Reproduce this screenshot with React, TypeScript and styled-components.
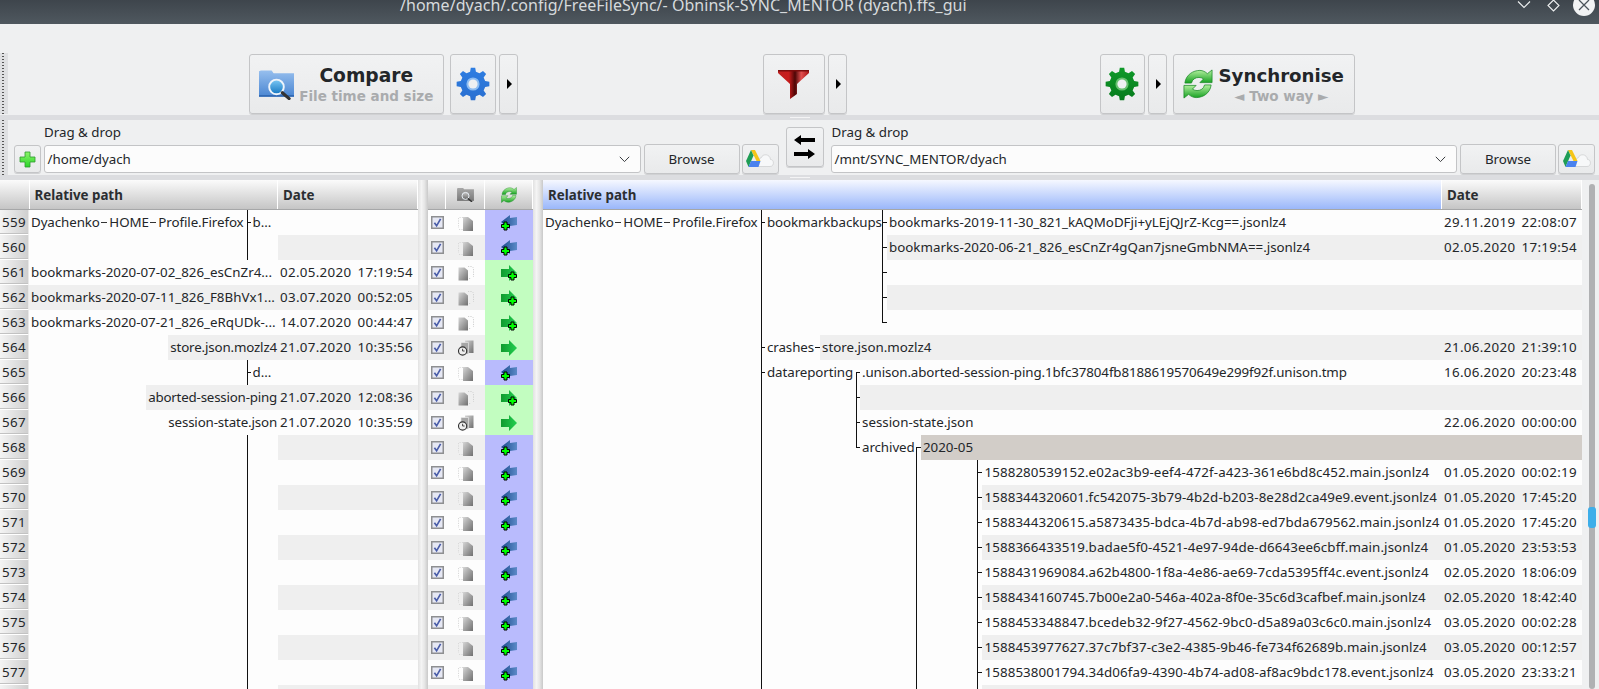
import React from "react";
import styled, { createGlobalStyle } from "styled-components";

const Global = createGlobalStyle`
  html, body { margin: 0; padding: 0; background: #eff0f1; }
  body { font-family: "Noto Sans", "Open Sans", sans-serif; font-size: 13.33px; color: #232629; overflow: hidden; }
  * { box-sizing: border-box; }
`;

const Page = styled.div`
  width: 1599px; height: 689px; display: flex; flex-direction: column; overflow: hidden; background: #eff0f1;
`;
const TitleBar = styled.div`
  height: 24px; flex: none; display: flex; justify-content: space-between; overflow: hidden;
  background: linear-gradient(#3e454c, #4f585f);
`;
const TitleText = styled.div`
  margin-left: 400px; width: 580px; font-size: 16px; letter-spacing: .03px; line-height: 10px; color: #d6dadc; white-space: nowrap;
`;
const Toolbar = styled.div`
  height: 91px; flex: none; display: flex; align-items: flex-end; padding-bottom: 1px;
`;
const Grip = styled.div`
  width: 8px; flex: none; align-self: stretch; background-color: #dfe0e2; margin-top: ${p => p.$top || 0}px;
  background-image: radial-gradient(circle, #555 0 1px, transparent 1px);
  background-size: 2px 3px; background-repeat: repeat-y; background-position: 2px 2px;
`;
const ToolGroup = styled.div<{ $at: number }>`
  display: flex; margin-left: ${p => p.$at}px; height: 60px; gap: ${p => p.$gap ?? 3}px;
`;
const Raised = styled.div`
  display: flex; align-items: center; justify-content: center; flex: none;
  border: 1px solid #c4c5c7; border-radius: 3px; background: linear-gradient(#f1f2f3, #e9eaeb);
  box-shadow: 0 1px 0 #d0d1d3;
`;
const BigButton = styled(Raised)<{ $w: number; $lead?: number }>`
  width: ${p => p.$w}px; height: 60px; padding: 0 9px; gap: 5px; margin-left: ${p => p.$lead || 0}px;
  justify-content: flex-start;
`;
const IconButton = styled(Raised)<{ $w: number; $lead?: number }>`
  width: ${p => p.$w}px; height: 60px; margin-left: ${p => p.$lead || 0}px;
`;
const MenuButton = styled(Raised)` width: 19px; height: 60px; padding-left: 2px; `;
const Triangle = styled.span`
  width: 0; height: 0; border-left: 5px solid #000; border-top: 5px solid transparent; border-bottom: 5px solid transparent;
`;
const BigLabel = styled.div`
  flex: 1; display: flex; flex-direction: column; align-items: center; font-family: "DejaVu Sans", sans-serif; font-weight: 700;
`;
const BigTitle = styled.div<{ $size?: number }>`
  font-size: ${p => p.$size || 18.67}px; line-height: 24px; color: #232629; white-space: nowrap;
`;
const BigSub = styled.div`
  font-size: 13.5px; line-height: 17px; color: #a9abad; white-space: nowrap;
`;
const Sash = styled.div`
  height: 5px; flex: none; background: #dcdde0; display: flex; justify-content: center; padding-top: 2px;
  &::after { content: ""; width: 20px; height: 1px; background: #f4f4f5; }
`;
const FolderBar = styled.div`
  height: 55px; flex: none; display: flex;
`;
const FolderPanel = styled.div<{ $w: number }>`
  width: ${p => p.$w}px; flex: none; display: flex; flex-direction: column;
`;
const DropLabel = styled.div<{ $at: number }>`
  height: 25px; padding-left: ${p => p.$at}px; line-height: 24px; white-space: nowrap;
`;
const FolderRow = styled.div<{ $lead?: number }>`
  display: flex; align-items: center; height: 30px; margin-top: -1px; padding-left: ${p => p.$lead || 0}px;
`;
const PlusButton = styled(Raised)` width: 27px; height: 28px; margin-right: 2.5px; `;
const Combo = styled.div<{ $w: number }>`
  width: ${p => p.$w}px; height: 28px; flex: none; display: flex; align-items: center; justify-content: space-between;
  border: 1px solid #c3c4c6; border-radius: 3px; background: #fcfcfc; padding: 0 10px 0 3px; margin-right: 3px;
`;
const Browse = styled(Raised)`
  width: 96px; height: 30px; margin-right: 2px;
`;
const Cloud = styled(Raised)` width: 37px; height: 30px; `;
const SwapSlot = styled.div`
  width: 38px; flex: none; margin: 7px 7px 0 7px;
`;
const SwapButton = styled(Raised)` width: 38px; height: 40px; `;

const Main = styled.div`
  flex: 1; min-height: 0; display: flex; background: #fdfdfd; overflow: hidden;
`;
const Column = styled.div<{ $w: number }>`
  width: ${p => p.$w}px; flex: none; display: flex; flex-direction: column;
`;
const HeaderRow = styled.div`
  height: 30px; flex: none; display: flex; border-bottom: 1px solid #a6a7a8;
`;
const HeadCell = styled.div<{ $w?: number; $active?: boolean }>`
  ${p => (p.$w ? `width:${p.$w}px;flex:none;` : "flex:1;")}
  display: flex; align-items: center; padding-left: 5px; font-weight: 700; color: #2b2e31; white-space: nowrap;
  background: ${p => (p.$active ? "linear-gradient(#f6f8ff, #9ab7fb)" : "linear-gradient(#fbfbfb, #c5c5c5)")};
  border-right: 1px solid #fff;
`;
const IconHead = styled(HeadCell)` justify-content: center; padding: 0; `;
const Row = styled.div`
  height: 25px; flex: none; display: flex; line-height: 24px;
`;
const RowNum = styled.div`
  width: 29px; flex: none; padding-left: 2px; background: linear-gradient(90deg, #f4f4f4, #cfcfcf);
  border-bottom: 1px solid #fff; border-right: 1px solid #e8e8e8; box-shadow: inset 0 -1px 0 #c2c2c2; letter-spacing: .35px;
`;
const PathCell = styled.div<{ $alt?: boolean; $end?: boolean }>`
  flex: 1; min-width: 0; display: flex; white-space: nowrap; overflow: hidden;
  justify-content: ${p => (p.$end ? "flex-end" : "flex-start")};
  background: ${p => (p.$alt ? "#efefef" : "transparent")};
`;
const DateCell = styled.div<{ $w: number; $alt?: boolean; $tone?: string }>`
  width: ${p => p.$w}px; flex: none; display: flex; justify-content: space-between; padding: 0 5px 0 2px; white-space: nowrap;
  background: ${p => p.$tone || (p.$alt ? "#efefef" : "transparent")};
  letter-spacing: .33px;
`;
const Seg = styled.div<{ $w: number; $pad?: number }>`
  width: ${p => p.$w}px; flex: none; padding-left: ${p => p.$pad || 0}px; display: flex; white-space: nowrap; letter-spacing: -.08px;
`;
const Name = styled.div<{ $tone?: string; $pad?: number; $fill?: boolean; $track?: number }>`
  ${p => (p.$fill ? "flex:1;" : "flex:none;")} min-width: 0; padding: 0 1px 0 ${p => p.$pad ?? 2}px;
  background: ${p => p.$tone || "transparent"}; white-space: nowrap; overflow: hidden;
  letter-spacing: ${p => p.$track || 0}px;
`;
const Dash = styled.span`
  display: inline-block; width: 6px; height: 1px; background: #333; margin: 12px 2px 0 1.5px; flex: none;
`;
const Guide = styled.div<{ $w: number; $v?: "full" | "top" | "bottom"; $tick?: number }>`
  width: ${p => p.$w}px; flex: none; height: 25px; background-repeat: no-repeat;
  background-image: linear-gradient(#111, #111), linear-gradient(#111, #111);
  background-size:
    1px ${p => (p.$v === "full" ? 25 : p.$v ? 13 : 0)}px,
    ${p => p.$tick || 0}px 1px;
  background-position:
    0 ${p => (p.$v === "bottom" ? 12 : 0)}px,
    0 12px;
`;
const Sep = styled.div`
  width: 10px; flex: none; background: linear-gradient(90deg, #e2e2e2 0, #f4f4f4 35%, #e6e6e6 65%, #c9c9c9 100%);
`;
const CheckCell = styled.div<{ $alt?: boolean }>`
  width: 18px; flex: none; display: flex; align-items: center; justify-content: center; padding-bottom: 1px;
  background: ${p => (p.$alt ? "#efefef" : "transparent")};
`;
const CatCell = styled.div<{ $alt?: boolean }>`
  width: 39px; flex: none; display: flex; align-items: center; justify-content: center;
  background: ${p => (p.$alt ? "#efefef" : "transparent")};
`;
const ActionCell = styled.div<{ $dir: string }>`
  width: 48px; flex: none; display: flex; align-items: center; justify-content: center;
  background: ${p => (p.$dir === "l" ? "#b9bbfd" : "#c2fdc0")};
`;
const ScrollTrack = styled.div`
  width: 17px; flex: none; background: #eff0f1; padding: 4px 4px 0 7px; display: flex; flex-direction: column; align-items: stretch; height: 100%;
`;
const ScrollGroove = styled.div`
  height: 100%; background: #b0b1b3; border-radius: 3px; padding-top: 323px;
`;
const ScrollThumb = styled.div`
  height: 21px; background: #3daee9; border-radius: 3px; margin: 0 -1px;
`;

/* ---------- drawings ---------- */
function gearPath(cx: number, cy: number, ro: number, ri: number, teeth = 8) {
  const pts: string[] = [];
  const step = (Math.PI * 2) / teeth;
  for (let i = 0; i < teeth; i++) {
    const a = i * step - Math.PI / 2;
    const list: [number, number][] = [
      [ri, a - step * 0.3], [ro, a - step * 0.17], [ro, a + step * 0.17], [ri, a + step * 0.3],
    ];
    list.forEach(([r, t]) => pts.push(`${(cx + r * Math.cos(t)).toFixed(2)} ${(cy + r * Math.sin(t)).toFixed(2)}`));
  }
  return "M" + pts.join("L") + "Z";
}
const Gear = ({ c1, c2, ring }: { c1: string; c2: string; ring: string }) => (
  <svg width="34" height="34" viewBox="0 0 34 34">
    <defs>
      <linearGradient id={"g" + c1.slice(1)} x1="0" y1="0" x2="0" y2="1">
        <stop offset="0" stopColor={c1} /><stop offset="1" stopColor={c2} />
      </linearGradient>
    </defs>
    <path d={gearPath(17, 17, 16.5, 12.5)} fill={`url(#g${c1.slice(1)})`} />
    <circle cx="17" cy="17" r="6.6" fill={ring} />
    <circle cx="17" cy="17" r="4.6" fill="#eef0f2" />
  </svg>
);
const FolderLens = ({ grey, w, h }: { grey?: boolean; w: number; h: number }) => (
  <svg width={w} height={h} viewBox="0 0 36 32">
    <defs>
      <linearGradient id={grey ? "fg" : "fb"} x1="0" y1="0" x2="0" y2="1">
        <stop offset="0" stopColor={grey ? "#a8a8a8" : "#97bfee"} />
        <stop offset="1" stopColor={grey ? "#7a7a7a" : "#4a86d2"} />
      </linearGradient>
      <linearGradient id={grey ? "lg" : "lb"} x1="0" y1="0" x2="0" y2="1">
        <stop offset="0" stopColor={grey ? "#c8c8c8" : "#7cc8f4"} />
        <stop offset="1" stopColor={grey ? "#666" : "#1577c2"} />
      </linearGradient>
    </defs>
    <path d="M0 3 L0 29 L36 29 L36 5 L15 5 L13 2 L2 2 Z" fill={`url(#${grey ? "fg" : "fb"})`} />
    <rect x="0" y="27.5" width="36" height="1.5" fill={grey ? "#666" : "#2d64ae"} />
    <circle cx="18" cy="19" r="7.5" fill={`url(#${grey ? "lg" : "lb"})`} stroke="#eef4fb" strokeWidth="2" />
    <path d="M24 25 L31 31" stroke="#333" strokeWidth="3.2" strokeLinecap="round" />
  </svg>
);
const Funnel = () => (
  <svg width="31" height="30" viewBox="0 0 31 30">
    <defs>
      <linearGradient id="fn" x1="0" y1="0" x2="1" y2="0">
        <stop offset="0" stopColor="#c02020" /><stop offset=".35" stopColor="#c81c1c" />
        <stop offset=".55" stopColor="#4c0606" /><stop offset=".75" stopColor="#e25050" /><stop offset="1" stopColor="#a81414" />
      </linearGradient>
    </defs>
    <path d="M0 1 H31 V4 L19 15 V25 L12 30 V15 L0 4 Z" fill="url(#fn)" />
    <rect x="0" y="1" width="31" height="1.5" fill="#7c0c0c" />
  </svg>
);
const SyncArrows = ({ size }: { size: number }) => (
  <svg width={size} height={size} viewBox="0 0 32 32">
    <defs>
      <linearGradient id="sy" x1="0" y1="0" x2="0" y2="1">
        <stop offset="0" stopColor="#b4f0a0" /><stop offset="1" stopColor="#14a020" />
      </linearGradient>
    </defs>
    <path d="M2 15 C3 6 11 1.5 18 1.5 C21 1.5 24 3 26 5 L31 1 L31 14.5 L18 14.5 L22 10.5 C20 9.5 19 9 17 9 C13 9 10 11 9 15 Z" fill="url(#sy)" stroke="#1a8a26" strokeWidth=".8" />
    <path d="M30 17 C29 26 21 30.5 14 30.5 C11 30.5 8 29 6 27 L1 31 L1 17.5 L14 17.5 L10 21.5 C12 22.5 13 23 15 23 C19 23 22 21 23 17 Z" fill="url(#sy)" stroke="#1a8a26" strokeWidth=".8" />
  </svg>
);
const GreenPlus = () => (
  <svg width="17" height="17" viewBox="0 0 17 17">
    <defs>
      <linearGradient id="gp" x1="0" y1="0" x2="0" y2="1">
        <stop offset="0" stopColor="#8cf56a" /><stop offset="1" stopColor="#2ad42a" />
      </linearGradient>
    </defs>
    <path d="M6 1 H11 V6 H16 V11 H11 V16 H6 V11 H1 V6 H6 Z" fill="url(#gp)" stroke="#2f9a2f" strokeWidth=".8" />
  </svg>
);
const Chevron = () => (
  <svg width="11" height="7" viewBox="0 0 11 7">
    <path d="M.8 .8 L5.5 5.6 L10.2 .8" fill="none" stroke="#3a3d40" strokeWidth="1" />
  </svg>
);
const DriveCloud = () => (
  <svg width="28" height="18" viewBox="0 0 28 18">
    <path d="M12 16.5 H24 C28.5 16.5 28.5 9.5 24.5 9.5 C24 4 17 3 15 8 C12 8 10 16 12 16.5 Z" fill="#f7f8f9" stroke="#cfd0d2" strokeWidth=".8" />
    <path d="M5 0 L9 0 L14.5 11 L10.5 11 Z" fill="#f5c518" />
    <path d="M5 0 L0 11 L2.5 17 L7.5 5.5 Z" fill="#1f9d55" />
    <path d="M5 11 L14.5 11 L12.5 17 L2.5 17 Z" fill="#4a82ee" />
  </svg>
);
const SwapArrows = () => (
  <svg width="21" height="24" viewBox="0 0 21 24">
    <path d="M0 5 L7 0 V3 H21 V7 H7 V10 Z" fill="#000" />
    <path d="M21 19 L14 14 V17 H0 V21 H14 V24 Z" fill="#000" />
  </svg>
);
const Check = () => (
  <svg width="13" height="13" viewBox="0 0 13 13">
    <rect x=".75" y=".75" width="11.5" height="11.5" fill="#e6e8f4" stroke="#8e8f91" strokeWidth="1.5" />
    <path d="M3.4 6.8 L5.6 9.8 L9.6 2.8" fill="none" stroke="#4a5da8" strokeWidth="1.7" />
  </svg>
);
const docGrad = (
  <defs>
    <linearGradient id="dg" x1="0" y1="0" x2="1" y2="1">
      <stop offset="0" stopColor="#d6d6d6" /><stop offset="1" stopColor="#6f6f6f" />
    </linearGradient>
  </defs>
);
const Cat = ({ kind }: { kind: string }) => (
  <svg width="16" height="16" viewBox="0 0 16 16">
    {docGrad}
    {kind === "l" && (
      <>
        <path d="M1.5 2.5 H6 M.5 3 V13 M1 14.5 H5" fill="none" stroke="#d9d9d9" strokeDasharray="1.2 1.2" />
        <path d="M5 2 H10 L15 6 V16 H5 Z" fill="url(#dg)" />
      </>
    )}
    {kind === "r" && (
      <>
        <path d="M10 1.5 H14 L15.5 3 V12 M11 13.5 H13" fill="none" stroke="#d0d0d0" strokeDasharray="1.2 1.2" />
        <path d="M.5 2.5 H6.5 L10 5.5 V15.5 H.5 Z" fill="url(#dg)" />
      </>
    )}
    {kind === "t" && (
      <>
        <path d="M7 .5 H15.5 V13 H7 Z" fill="url(#dg)" />
        <path d="M3 2.5 H10.5 V14 H3 Z" fill="#a6a6a6" stroke="#eee" strokeWidth=".6" />
        <circle cx="4.6" cy="11" r="4.1" fill="#eee" stroke="#333" strokeWidth="1.1" />
        <path d="M4.6 8.8 V11 H6.6" fill="none" stroke="#333" strokeWidth=".9" />
      </>
    )}
  </svg>
);
const PLUS = "M3 .5 H6 V3 H8.5 V6 H6 V8.5 H3 V6 H.5 V3 H3 Z";
const Action = ({ dir, plus }: { dir: string; plus: boolean }) => (
  <svg width="16" height="16" viewBox="0 0 16 16">
    <defs>
      <linearGradient id="al" x1="0" y1="0" x2="1" y2="0">
        <stop offset="0" stopColor="#1a4a8c" /><stop offset="1" stopColor="#5c8ac8" />
      </linearGradient>
      <linearGradient id="ar" x1="0" y1="0" x2="1" y2="0">
        <stop offset="0" stopColor="#0f9a2e" /><stop offset="1" stopColor="#22cf50" />
      </linearGradient>
    </defs>
    {dir === "l" ? (
      <>
        <path d="M0 7 L9 0 V3 L16 2 V10 L9 11 V14 Z" fill="url(#al)" />
        {plus && <path transform="translate(0 6.5)" d={PLUS} fill="#0f0" stroke="#000" strokeWidth="1" />}
      </>
    ) : (
      <>
        <path d="M0 4 H8 V0 L16 8 L8 16 V12 H0 Z" fill="url(#ar)" />
        {plus && <path transform="translate(7 6.5)" d={PLUS} fill="#0f0" stroke="#000" strokeWidth="1" />}
      </>
    )}
  </svg>
);
const WindowButtons = () => (
  <svg width="90" height="24" viewBox="0 0 90 24">
    <path d="M9 1.5 L15 7.5 L21 1.5" fill="none" stroke="#eef0f1" strokeWidth="1.1" />
    <path d="M39 5.5 L44.5 0 L50 5.5 L44.5 11 Z" fill="none" stroke="#eef0f1" strokeWidth="1.1" />
    <circle cx="75" cy="5" r="11" fill="#f2f3f4" />
    <path d="M70 0 L80 10 M80 0 L70 10" stroke="#4b535a" strokeWidth="1.3" />
  </svg>
);

/* ---------- data ---------- */
const kinds: Record<number, [string, string, boolean]> = {
  559: ["l", "l", true], 560: ["l", "l", true], 561: ["r", "r", true], 562: ["r", "r", true], 563: ["r", "r", true],
  564: ["t", "r", false], 565: ["l", "l", true], 566: ["r", "r", true], 567: ["t", "r", false],
};
const nums = Array.from({ length: 20 }, (_, i) => 559 + i);

const leftDates: Record<number, [string, string]> = {
  561: ["02.05.2020", "17:19:54"], 562: ["03.07.2020", "00:52:05"], 563: ["14.07.2020", "00:44:47"],
  564: ["21.07.2020", "10:35:56"], 566: ["21.07.2020", "12:08:36"], 567: ["21.07.2020", "10:35:59"],
};
const rightDates: Record<number, [string, string]> = {
  559: ["29.11.2019", "22:08:07"], 560: ["02.05.2020", "17:19:54"], 564: ["21.06.2020", "21:39:10"],
  565: ["16.06.2020", "20:23:48"], 567: ["22.06.2020", "00:00:00"], 569: ["01.05.2020", "00:02:19"],
  570: ["01.05.2020", "17:45:20"], 571: ["01.05.2020", "17:45:20"], 572: ["01.05.2020", "23:53:53"],
  573: ["02.05.2020", "18:06:09"], 574: ["02.05.2020", "18:42:40"], 575: ["03.05.2020", "00:02:28"],
  576: ["03.05.2020", "00:12:57"], 577: ["03.05.2020", "23:33:21"],
};
const files: Record<number, string> = {
  569: "1588280539152.e02ac3b9-eef4-472f-a423-361e6bd8c452.main.jsonlz4",
  570: "1588344320601.fc542075-3b79-4b2d-b203-8e28d2ca49e9.event.jsonlz4",
  571: "1588344320615.a5873435-bdca-4b7d-ab98-ed7bda679562.main.jsonlz4",
  572: "1588366433519.badae5f0-4521-4e97-94de-d6643ee6cbff.main.jsonlz4",
  573: "1588431969084.a62b4800-1f8a-4e86-ae69-7cda5395ff4c.event.jsonlz4",
  574: "1588434160745.7b00e2a0-546a-402a-8f0e-35c6d3cafbef.main.jsonlz4",
  575: "1588453348847.bcedeb32-9f27-4562-9bc0-d5a89a03c6c0.main.jsonlz4",
  576: "1588453977627.37c7bf37-c3e2-4385-9b46-fe734f62689b.main.jsonlz4",
  577: "1588538001794.34d06fa9-4390-4b74-ad08-af8ac9bdc178.event.jsonlz4",
};
const GREY = "#efefef";
const BEIGE = "#d2cdc8";

const LeftPath = ({ n }: { n: number }) => {
  if (n === 559 || n === 565)
    return (
      <PathCell>
        <Seg $w={217.5} $pad={2}>{n === 559 && <>Dyachenko<Dash />HOME<Dash />Profile.Firefox</>}</Seg>
        <Guide $w={6} $v="full" $tick={4} />
        <Name $pad={0}>{n === 559 ? "b..." : "d..."}</Name>
      </PathCell>
    );
  if (n === 561) return <PathCell><Name>bookmarks-2020-07-02_826_esCnZr4...</Name></PathCell>;
  if (n === 562) return <PathCell $alt><Name>bookmarks-2020-07-11_826_F8BhVx1...</Name></PathCell>;
  if (n === 563) return <PathCell><Name>bookmarks-2020-07-21_826_eRqUDk-...</Name></PathCell>;
  if (n === 564) return <PathCell $end><Name $tone={GREY} $track={-.15}>store.json.mozlz4</Name></PathCell>;
  if (n === 566) return <PathCell $end><Name $tone={GREY} $track={-.2}>aborted-session-ping</Name></PathCell>;
  if (n === 567) return <PathCell $end><Name $track={-.15}>session-state.json</Name></PathCell>;
  return (
    <PathCell>
      <Seg $w={217.5} />
      <Guide $w={6} $v="full" />
    </PathCell>
  );
};

const RightPath = ({ n }: { n: number }) => {
  const alt = n % 2 === 0;
  const tone = alt ? GREY : undefined;
  const first = n === 559;
  const root = (
    <Seg $w={217.5} $pad={2}>{first && <>Dyachenko<Dash />HOME<Dash />Profile.Firefox</>}</Seg>
  );
  if (n <= 563) {
    const names: Record<number, string> = {
      559: "bookmarks-2019-11-30_821_kAQMoDFji+yLEjQJrZ-Kcg==.jsonlz4",
      560: "bookmarks-2020-06-21_826_esCnZr4gQan7jsneGmbNMA==.jsonlz4",
    };
    return (
      <PathCell>
        {root}
        <Guide $w={6.5} $v="full" $tick={first ? 4 : 0} />
        <Seg $w={115}>{first && "bookmarkbackups"}</Seg>
        <Guide $w={5} $v={n === 563 ? "top" : "full"} $tick={5} />
        <Name $fill $tone={tone}>{names[n]}</Name>
      </PathCell>
    );
  }
  if (n === 564)
    return (
      <PathCell>
        {root}
        <Guide $w={6.5} $v="full" $tick={4} />
        <Seg $w={48}>crashes</Seg>
        <Guide $w={5} $tick={5} />
        <Name $fill $tone={GREY}>store.json.mozlz4</Name>
      </PathCell>
    );
  if (n >= 565 && n <= 568) {
    return (
      <PathCell>
        {root}
        <Guide $w={6.5} $v="full" $tick={n === 565 ? 4 : 0} />
        <Seg $w={89}>{n === 565 && "datareporting"}</Seg>
        {n === 566 ? (
          <>
            <Guide $w={4} $v="full" $tick={4} />
            <Name $fill $tone={GREY} />
          </>
        ) : (
          <>
            <Guide $w={6} $v={n === 565 ? "bottom" : n === 568 ? "top" : "full"} $tick={4} />
            {n === 565 && <Name $fill $pad={0} $track={-.11}>.unison.aborted-session-ping.1bfc37804fb8188619570649e299f92f.unison.tmp</Name>}
            {n === 567 && <Name $fill $pad={0}>session-state.json</Name>}
            {n === 568 && (
              <>
                <Seg $w={54}>archived</Seg>
                <Guide $w={5} $v="bottom" $tick={5} />
                <Name $fill $tone={BEIGE}>2020-05</Name>
              </>
            )}
          </>
        )}
      </PathCell>
    );
  }
  return (
    <PathCell>
      {root}
      <Guide $w={6.5} $v="full" />
      <Seg $w={149} />
      <Guide $w={61} $v="full" />
      <Guide $w={5} $v="full" $tick={5} />
      <Name $fill $pad={2.5} $track={.1} $tone={tone}>{files[n]}</Name>
    </PathCell>
  );
};

const Stamp = ({ v }: { v?: [string, string] }) => (v ? <><span>{v[0]}</span><span>{v[1]}</span></> : null);

export default function App() {
  return (
    <Page>
      <Global />
      <TitleBar>
        <TitleText>/home/dyach/.config/FreeFileSync/- Obninsk-SYNC_MENTOR (dyach).ffs_gui</TitleText>
        <WindowButtons />
      </TitleBar>
      <Toolbar>
        <Grip $top={29} />
        <ToolGroup $at={240.5}>
          <BigButton $w={195.5}>
            <FolderLens w={35} h={32} />
            <BigLabel>
              <BigTitle>Compare</BigTitle>
              <BigSub>File time and size</BigSub>
            </BigLabel>
          </BigButton>
          <IconButton $w={46} $lead={3}><Gear c1="#2e7ee2" c2="#2a6fd0" ring="#8dbdf2" /></IconButton>
          <MenuButton><Triangle /></MenuButton>
        </ToolGroup>
        <ToolGroup $at={244.5}>
          <IconButton $w={62}><Funnel /></IconButton>
          <MenuButton><Triangle /></MenuButton>
        </ToolGroup>
        <ToolGroup $at={253}>
          <IconButton $w={45.5}><Gear c1="#0f9a2a" c2="#067a1c" ring="#66c070" /></IconButton>
          <MenuButton><Triangle /></MenuButton>
          <BigButton $w={181.5} $lead={3}>
            <SyncArrows size={30} />
            <BigLabel>
              <BigTitle $size={18.2}>Synchronise</BigTitle>
              <BigSub>◄ Two way ►</BigSub>
            </BigLabel>
          </BigButton>
        </ToolGroup>
      </Toolbar>
      <Sash />
      <FolderBar>
        <Grip />
        <FolderPanel $w={770.5}>
          <DropLabel $at={36}>Drag &amp; drop</DropLabel>
          <FolderRow $lead={6}>
            <PlusButton><GreenPlus /></PlusButton>
            <Combo $w={597}><span>/home/dyach</span><Chevron /></Combo>
            <Browse>Browse</Browse>
            <Cloud><DriveCloud /></Cloud>
          </FolderRow>
        </FolderPanel>
        <SwapSlot><SwapButton><SwapArrows /></SwapButton></SwapSlot>
        <FolderPanel $w={768}>
          <DropLabel $at={1}>Drag &amp; drop</DropLabel>
          <FolderRow>
            <Combo $w={626.5}><span>/mnt/SYNC_MENTOR/dyach</span><Chevron /></Combo>
            <Browse>Browse</Browse>
            <Cloud><DriveCloud /></Cloud>
          </FolderRow>
        </FolderPanel>
      </FolderBar>
      <Sash />
      <Main>
        <Column $w={418}>
          <HeaderRow>
            <HeadCell $w={29.5} />
            <HeadCell $w={248.5}>Relative path</HeadCell>
            <HeadCell $w={140}>Date</HeadCell>
          </HeaderRow>
          {nums.map(n => (
            <Row key={n}>
              <RowNum>{n < 578 ? n : ""}</RowNum>
              <LeftPath n={n} />
              <DateCell $w={140} $alt={n % 2 === 0}><Stamp v={leftDates[n]} /></DateCell>
            </Row>
          ))}
        </Column>
        <Sep />
        <Column $w={105}>
          <HeaderRow>
            <IconHead $w={18} />
            <IconHead $w={39}><FolderLens grey w={17} h={15} /></IconHead>
            <IconHead $w={48}><SyncArrows size={16} /></IconHead>
          </HeaderRow>
          {nums.map(n => {
            const k = kinds[n] || ["l", "l", true];
            return (
              <Row key={n}>
                <CheckCell $alt={n % 2 === 0}><Check /></CheckCell>
                <CatCell $alt={n % 2 === 0}><Cat kind={k[0]} /></CatCell>
                <ActionCell $dir={k[1]}><Action dir={k[1]} plus={k[2]} /></ActionCell>
              </Row>
            );
          })}
        </Column>
        <Sep />
        <Column $w={1039}>
          <HeaderRow>
            <HeadCell $w={899} $active>Relative path</HeadCell>
            <HeadCell $w={140}>Date</HeadCell>
          </HeaderRow>
          {nums.map(n => (
            <Row key={n}>
              <RightPath n={n} />
              <DateCell $w={140} $alt={n % 2 === 0} $tone={n === 568 ? BEIGE : undefined}><Stamp v={rightDates[n]} /></DateCell>
            </Row>
          ))}
        </Column>
        <ScrollTrack>
          <ScrollGroove><ScrollThumb /></ScrollGroove>
        </ScrollTrack>
      </Main>
    </Page>
  );
}
